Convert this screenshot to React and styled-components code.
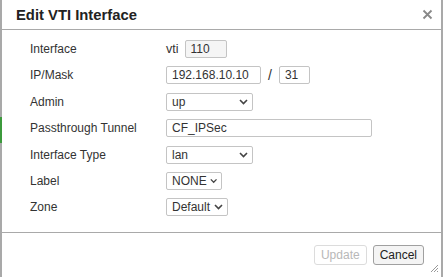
import React from 'react';
import styled, {createGlobalStyle} from 'styled-components';

const Global = createGlobalStyle`
  html, body {
    margin: 0;
    padding: 0;
    background: #fff;
  }
  body {
    font-family: "Liberation Sans", Arial, sans-serif;
    color: #333;
  }
`;

const Page = styled.div`
  display: flex;
  flex-direction: row;
  width: 443px;
  height: 277px;
  overflow: hidden;
`;

const EdgeStrip = styled.div`
  display: flex;
  flex-direction: column;
  width: 2px;
  background: #a9a9a9;
`;

const EdgeMark = styled.div`
  margin-top: ${props => props.top}px;
  height: ${props => props.size}px;
  background: #3c9a3c;
`;

const Dialog = styled.div`
  flex: 1;
  display: flex;
  flex-direction: column;
  background: #fff;
`;

const Header = styled.div`
  display: flex;
  align-items: center;
  justify-content: space-between;
  height: 29px;
  padding: 0 8px 0 14px;
  border-bottom: 1px solid #a9a9a9;
`;

const Title = styled.span`
  font-size: 14.8px;
  font-weight: 700;
  color: #222;
`;

const CloseButton = styled.span`
  display: flex;
  width: 11px;
  height: 11px;
`;

const Body = styled.div`
  display: grid;
  grid-template-columns: 136px 1fr;
  grid-auto-rows: 26.4px;
  align-items: start;
  height: 192px;
  padding: 10px 0 0 28px;
  border-bottom: 1px solid #a9a9a9;
`;

const Label = styled.div`
  font-size: 12px;
  line-height: 18px;
  color: #333;
`;

const Field = styled.div`
  display: flex;
  align-items: center;
  font-size: 12px;
  height: 18px;
`;

const Prefix = styled.span`
  font-size: 12.5px;
  color: #333;
  margin-right: 6px;
`;

const Slash = styled.span`
  font-size: 14px;
  color: #333;
  margin: 0 7px;
`;

const Input = styled.div`
  box-sizing: border-box;
  width: ${props => props.w}px;
  height: 18px;
  padding-left: 5px;
  border: 1px solid #c4c4c4;
  border-radius: 2px;
  background: ${props => (props.disabled ? '#f5f5f5' : '#fff')};
  font-size: 12px;
  line-height: 16px;
  color: #333;
`;

const SelectBox = styled.div`
  box-sizing: border-box;
  display: flex;
  align-items: center;
  justify-content: space-between;
  gap: 3px;
  width: ${props => props.w}px;
  height: 18px;
  padding: 0 4px 0 5px;
  border: 1px solid #c4c4c4;
  border-radius: 2px;
  background: #fff;
  font-size: 12px;
  color: #333;
  white-space: nowrap;
`;

const Footer = styled.div`
  display: flex;
  justify-content: flex-end;
  align-items: flex-start;
  gap: 6px;
  flex: 1;
  padding: 12px 17px 0 0;
  position: relative;
`;

const Button = styled.div`
  box-sizing: border-box;
  height: 20px;
  padding: 0 6px;
  border: 1px solid ${props => (props.disabled ? '#dcdcdc' : '#a0a0a0')};
  border-radius: 3px;
  background: ${props => (props.disabled ? '#fff' : '#f4f4f4')};
  color: ${props => (props.disabled ? '#b8b8b8' : '#222')};
  font-size: 12px;
  line-height: 18px;
`;

const Grip = styled.svg`
  position: absolute;
  right: 2px;
  bottom: 4px;
`;

function Chevron() {
  return (
    <svg width="9" height="6" viewBox="0 0 9 6">
      <path d="M1 1 L4.5 4.5 L8 1" fill="none" stroke="#444" strokeWidth="1.6" />
    </svg>
  );
}

function Select({w, value}) {
  return (
    <SelectBox w={w}>
      <span>{value}</span>
      <Chevron />
    </SelectBox>
  );
}

const rows = [
  {label: 'Interface', field: (
    <Field>
      <Prefix>vti</Prefix>
      <Input w={42} disabled>110</Input>
    </Field>
  )},
  {label: 'IP/Mask', field: (
    <Field>
      <Input w={95}>192.168.10.10</Input>
      <Slash>/</Slash>
      <Input w={31}>31</Input>
    </Field>
  )},
  {label: 'Admin', field: <Field><Select w={87} value="up" /></Field>},
  {label: 'Passthrough Tunnel', field: <Field><Input w={206}>CF_IPSec</Input></Field>},
  {label: 'Interface Type', field: <Field><Select w={87} value="lan" /></Field>},
  {label: 'Label', field: <Field><Select w={56} value="NONE" /></Field>},
  {label: 'Zone', field: <Field><Select w={62} value="Default" /></Field>},
];

export default function App() {
  return (
    <Page>
      <Global />
      <EdgeStrip>
        <EdgeMark top={117} size={26} />
      </EdgeStrip>
      <Dialog>
        <Header>
          <Title>Edit VTI Interface</Title>
          <CloseButton>
            <svg width="11" height="11" viewBox="0 0 11 11">
              <path d="M1.5 1.5 L9.5 9.5 M9.5 1.5 L1.5 9.5" stroke="#888" strokeWidth="1.8" />
            </svg>
          </CloseButton>
        </Header>
        <Body>
          {rows.map(row => (
            <React.Fragment key={row.label}>
              <Label>{row.label}</Label>
              {row.field}
            </React.Fragment>
          ))}
        </Body>
        <Footer>
          <Button disabled>Update</Button>
          <Button>Cancel</Button>
          <Grip width="10" height="10" viewBox="0 0 10 10">
            <path d="M9 2 L2 9 M9 5 L5 9 M9 8 L8 9" stroke="#999" strokeWidth="1" />
          </Grip>
        </Footer>
      </Dialog>
      <EdgeStrip />
    </Page>
  );
}
